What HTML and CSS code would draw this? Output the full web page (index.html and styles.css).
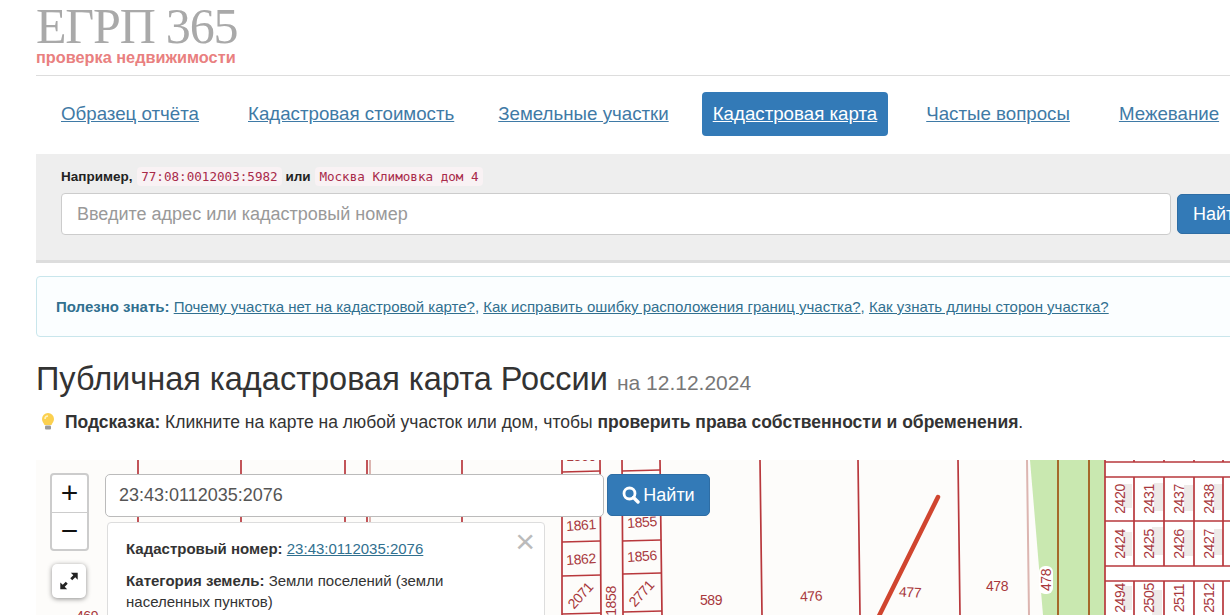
FILE: index.html
```html
<!DOCTYPE html>
<html lang="ru">
<head>
    <meta charset="UTF-8">
    <meta name="viewport" content="width=device-width, initial-scale=1.0">
    <title>Публичная кадастровая карта России</title>
    <link rel="stylesheet" href="styles.css">
</head>
<body>

<div class="page">
    <header class="logo">
        <div class="logo-title">ЕГРП 365</div>
        <div class="logo-sub">проверка недвижимости</div>
    </header>

    <nav class="nav">
        <a class="nav-item nav-item-wide" href="#">Образец отчёта</a>
        <a class="nav-item" href="#">Кадастровая стоимость</a>
        <a class="nav-item" href="#">Земельные участки</a>
        <a class="nav-item nav-item-active nav-item-wide" href="#">Кадастровая карта</a>
        <a class="nav-item nav-item-wide" href="#">Частые вопросы</a>
        <a class="nav-item" href="#">Межевание</a>
    </nav>

    <section class="search">
        <div class="search-hint">
            Например, <code class="chip">77:08:0012003:5982</code> или <code class="chip">Москва Климовка дом 4</code>
        </div>
        <form class="search-row">
            <input class="search-input" type="text" placeholder="Введите адрес или кадастровый номер">
            <button class="btn search-btn" type="button">Найти</button>
        </form>
    </section>

    <div class="info">
        <b>Полезно знать:</b>
        <a href="#">Почему участка нет на кадастровой карте?</a>,
        <a href="#">Как исправить ошибку расположения границ участка?</a>,
        <a href="#">Как узнать длины сторон участка?</a>
    </div>

    <h1 class="title">Публичная кадастровая карта России <small>на 12.12.2024</small></h1>

    <p class="tip">
        <svg class="tip-icon" viewBox="0 0 16 20" width="16" height="20">
            <path d="M8 1a6 6 0 0 0-6 6c0 2.600 1.700 3.800 2.500 6h7c.8-2.200 2.500-3.400 2.500-6a6 6 0 0 0-6-6z" fill="#fbd04f"/>
            <path d="M5 7a3 3 0 0 1 3-3" fill="none" stroke="#fff3c0" stroke-width="1.500"/>
            <rect x="5" y="13.500" width="6" height="4" rx="1" fill="#9a9a9a"/>
        </svg>
        <b>Подсказка:</b> Кликните на карте на любой участок или дом, чтобы <b>проверить права собственности и обременения</b>.
    </p>

    <div class="map">
        <svg class="map-canvas" viewBox="36 460 1194 155" width="1194" height="155">
            <polygon points="1030,460 1105,460 1105,615 1043,615" fill="#c9e8b0"/>
            <g class="cells">
                <rect x="1105" y="477" width="125" height="89"/>
                <rect x="1105" y="581" width="125" height="34"/>
                <rect x="1105" y="460" width="125" height="2"/>
                <rect x="1105" y="462" width="125" height="15" fill="#fdfcfa"/>
                <rect x="1105" y="566" width="125" height="15" fill="#fdfcfa"/>
            </g>
            <g class="shades">
                <rect x="1123" y="484" width="9" height="24"/>
                <rect x="1154" y="483" width="9" height="28"/>
                <rect x="1184" y="485" width="9" height="26"/>
                <rect x="1214" y="484" width="9" height="26"/>
                <rect x="1123" y="532" width="9" height="24"/>
                <rect x="1152" y="527" width="11" height="28"/>
                <rect x="1184" y="530" width="9" height="26"/>
                <rect x="1214" y="529" width="9" height="26"/>
                <rect x="1123" y="586" width="9" height="24"/>
                <rect x="1152" y="590" width="10" height="25"/>
            </g>
            <g class="thin">
                <path d="M138 460V615M241 460V615M345 460V615M367 460V615M462 460V615"/>
                <path d="M562 460V615M600 460 601 615M622 460 623 615M660 460 662 615"/>
                <path d="M562 472 600 471M562 542 600 541M562 576 601 575M562 614 601 613"/>
                <path d="M622 471 660 470M622 541 661 540M623 574 661 573M623 612 662 611"/>
                <path d="M760 460 762 615M858 460 860 615M958 460 960 615"/>
                <path d="M1105 460V615"/>
                <path d="M1134 477V566M1164 477V566M1194 477V566M1223 477V566"/>
                <path d="M1134 581V615M1164 581V615M1194 581V615M1223 581V615"/>
                <path d="M1134 460V462M1164 460V462M1194 460V462M1223 460V462"/>
                <path d="M1105 462H1230M1105 477H1230M1105 521H1230M1105 566H1230M1105 581H1230"/>
            </g>
            <path class="pale" d="M1027 460 1029 615M370 460V615"/>
            <path class="brown" d="M1058 460V615M1089 460V615"/>
            <path class="road" d="M938 497 878 618"/>
            <rect x="1039" y="566" width="14" height="28" rx="6" fill="#fff"/>
            <g class="labels">
                <text x="581" y="530" transform="rotate(-4 581 526)">1861</text>
                <text x="581" y="564" transform="rotate(-4 581 560)">1862</text>
                <text x="581" y="600" transform="rotate(-48 581 596)">2071</text>
                <text x="642" y="527" transform="rotate(-4 642 523)">1855</text>
                <text x="642" y="561" transform="rotate(-4 642 557)">1856</text>
                <text x="642" y="598" transform="rotate(-48 642 594)">2771</text>
                <text x="612" y="605" transform="rotate(-90 612 601)">1858</text>
                <text x="711" y="605">589</text>
                <text x="811" y="601" transform="rotate(-3 811 597)">476</text>
                <text x="910" y="597" transform="rotate(3 910 593)">477</text>
                <text x="997" y="591">478</text>
                <text x="1047" y="584" transform="rotate(-90 1047 580)">478</text>
                <text x="87" y="621">469</text>
                <text x="581" y="461">1860</text>
                <text x="1120" y="504" transform="rotate(-90 1120 499)">2420</text>
                <text x="1149" y="504" transform="rotate(-90 1149 499)">2431</text>
                <text x="1179" y="504" transform="rotate(-90 1179 499)">2437</text>
                <text x="1209" y="504" transform="rotate(-90 1209 499)">2438</text>
                <text x="1120" y="549" transform="rotate(-90 1120 544)">2424</text>
                <text x="1149" y="549" transform="rotate(-90 1149 544)">2425</text>
                <text x="1179" y="549" transform="rotate(-90 1179 544)">2426</text>
                <text x="1209" y="549" transform="rotate(-90 1209 544)">2427</text>
                <text x="1120" y="603" transform="rotate(-90 1120 598)">2494</text>
                <text x="1149" y="603" transform="rotate(-90 1149 598)">2505</text>
                <text x="1179" y="603" transform="rotate(-90 1179 598)">2511</text>
                <text x="1209" y="603" transform="rotate(-90 1209 598)">2512</text>
            </g>
        </svg>

        <div class="zoom">
            <a class="zoom-btn" href="#">+</a>
            <a class="zoom-btn" href="#">&minus;</a>
        </div>

        <a class="fullscreen" href="#">
            <svg viewBox="0 0 24 24" width="22" height="22">
                <path d="M14 3h7.500v7.500l-2.700-2.700-3.300 3.300-2.100-2.100 3.300-3.300zM10 21H2.500v-7.500l2.700 2.700 3.300-3.300 2.100 2.100-3.300 3.300z" fill="#222"/>
            </svg>
        </a>

        <form class="map-search">
            <input class="map-input" type="text" value="23:43:0112035:2076">
            <button class="btn map-btn" type="button">
                <svg viewBox="0 0 18 18" width="18" height="18">
                    <circle cx="7.500" cy="7.500" r="5.500" fill="none" stroke="#fff" stroke-width="2.800"/>
                    <path d="M11.500 11.500 16 16" stroke="#fff" stroke-width="3.400" stroke-linecap="round"/>
                </svg>
                Найти
            </button>
        </form>

        <div class="popup">
            <span class="popup-close">&times;</span>
            <p><b>Кадастровый номер:</b> <a href="#">23:43:0112035:2076</a></p>
            <p><b>Категория земель:</b> Земли поселений (земли населенных пунктов)</p>
        </div>
    </div>
</div>

</body>
</html>
```

FILE: styles.css
```css
html, body {
    margin: 0;
    height: 615px;
    overflow: hidden;
}

body {
    font-family: "Liberation Sans", Arial, sans-serif;
    font-size: 14px;
    color: #333;
    background-color: #fff;
}

a {
    color: #337ab7;
}

.page {
    width: 1210px;
    margin-left: 36px;
}

/* шапка */
.logo {
    height: 76px;
    box-sizing: border-box;
    padding-top: 5px;
    border-bottom: 1px solid #ddd;
}

.logo-title {
    font-family: "Liberation Serif", serif;
    font-size: 50px;
    line-height: 43px;
    letter-spacing: -1.200px;
    color: #a9a9a9;
}

.logo-sub {
    font-size: 16.300px;
    font-weight: bold;
    line-height: 18px;
    color: #e98080;
}

/* меню */
.nav {
    display: flex;
    gap: 22px;
    padding: 16px 0 18px 14px;
}

.nav-item {
    flex: none;
    padding: 0 11px;
    font-size: 18.720px;
    line-height: 44px;
    color: #3f7aa6;
    border-radius: 4px;
}

.nav-item-wide {
    margin-right: 5px;
}

.nav-item-active {
    color: #fff;
    background-color: #337ab7;
}

/* поиск */
.search {
    height: 109px;
    box-sizing: border-box;
    padding: 13px 25px 0;
    background-color: #eee;
    border-bottom: 3px solid #ddd;
}

.search-hint {
    font-size: 13.500px;
    font-weight: bold;
    line-height: 20px;
    color: #222;
}

.chip {
    margin-left: 1px;
    padding: 2px 4px;
    font-family: "DejaVu Sans Mono", monospace;
    font-size: 12.600px;
    font-weight: normal;
    color: #a82a4a;
    background-color: #f9f2f4;
    border-radius: 4px;
}

.search-row {
    display: flex;
    gap: 6px;
    margin-top: 6px;
}

.search-input {
    flex: none;
    width: 1110px;
    height: 42px;
    box-sizing: border-box;
    padding: 0 15px;
    font-family: inherit;
    font-size: 18px;
    border: 1px solid #ccc;
    border-radius: 4px;
}

.search-input::placeholder {
    color: #999;
}

.btn {
    color: #fff;
    font-family: inherit;
    font-size: 18px;
    background-color: #337ab7;
    border: 1px solid #2e6da4;
    border-radius: 5px;
}

.search-btn {
    flex: none;
    height: 40px;
    margin-top: 1px;
    padding: 0 15px;
}

/* полезно знать */
.info {
    height: 61px;
    box-sizing: border-box;
    margin-top: 13px;
    padding: 0 19px;
    font-size: 15px;
    line-height: 60px;
    color: #31708f;
    background-color: #fbfeff;
    border: 1px solid #c9e6ec;
    border-radius: 4px;
    white-space: nowrap;
}

.info a {
    color: #31708f;
}

/* заголовок */
.title {
    margin: 22px 0 0;
    font-size: 32.500px;
    font-weight: normal;
    line-height: 40px;
    white-space: nowrap;
}

.title small {
    font-size: 21px;
    color: #777;
}

.tip {
    margin: 8px 0 0;
    font-size: 17.500px;
    line-height: 22px;
    white-space: nowrap;
}

.tip-icon {
    margin: 0 4px 0 4px;
    vertical-align: -4px;
}

/* карта */
.map {
    position: relative;
    height: 155px;
    margin-top: 27px;
    background-color: #fdfcfa;
    overflow: hidden;
}

.map-canvas {
    display: block;
}

.cells rect {
    fill: #fff;
}

.shades rect {
    fill: #eeeae8;
}

.thin path {
    fill: none;
    stroke: #b8383c;
    stroke-width: 1.700;
}

.pale {
    fill: none;
    stroke: #dcb5b0;
    stroke-width: 2;
}

.brown {
    fill: none;
    stroke: #a5682a;
    stroke-width: 2;
}

.road {
    stroke: #d0452f;
    stroke-width: 4.500;
    stroke-linecap: round;
}

.labels text {
    font-size: 14px;
    letter-spacing: -0.400px;
    fill: #a8383c;
    text-anchor: middle;
}

.zoom {
    position: absolute;
    left: 14px;
    top: 13px;
    width: 39px;
    box-sizing: border-box;
    border: 2px solid #ccc;
    border-radius: 4px;
    background-color: #fff;
}

.zoom-btn {
    display: block;
    height: 36.500px;
    font-size: 30px;
    line-height: 36px;
    text-align: center;
    text-decoration: none;
    color: #111;
}

.zoom-btn + .zoom-btn {
    border-top: 1px solid #ccc;
}

.fullscreen {
    position: absolute;
    left: 16px;
    top: 104px;
    display: flex;
    align-items: center;
    justify-content: center;
    width: 34px;
    height: 34px;
    background-color: #fff;
    border-radius: 5px;
    box-shadow: 0 1px 5px rgba(0, 0, 0, 0.45);
}

.map-search {
    position: absolute;
    left: 69px;
    top: 14px;
    display: flex;
    gap: 3px;
}

.map-input {
    width: 499px;
    height: 43px;
    box-sizing: border-box;
    padding: 0 13px;
    font-family: inherit;
    font-size: 18px;
    color: #555;
    border: 1px solid #bbb;
    border-radius: 5px;
}

.map-btn {
    display: flex;
    align-items: center;
    justify-content: center;
    gap: 3px;
    width: 103px;
    height: 42px;
    padding: 0;
}

.popup {
    position: absolute;
    left: 71px;
    top: 62px;
    width: 438px;
    height: 120px;
    box-sizing: border-box;
    padding: 15px 60px 0 18px;
    font-size: 15px;
    line-height: 21px;
    background-color: #fff;
    border: 1px solid #ddd;
    border-radius: 4px;
}

.popup p {
    margin: 0 0 11px;
}

.popup a {
    color: #31708f;
}

.popup-close {
    position: absolute;
    top: 7px;
    right: 9px;
    font-size: 34px;
    line-height: 22px;
    color: #bbb;
}
```
